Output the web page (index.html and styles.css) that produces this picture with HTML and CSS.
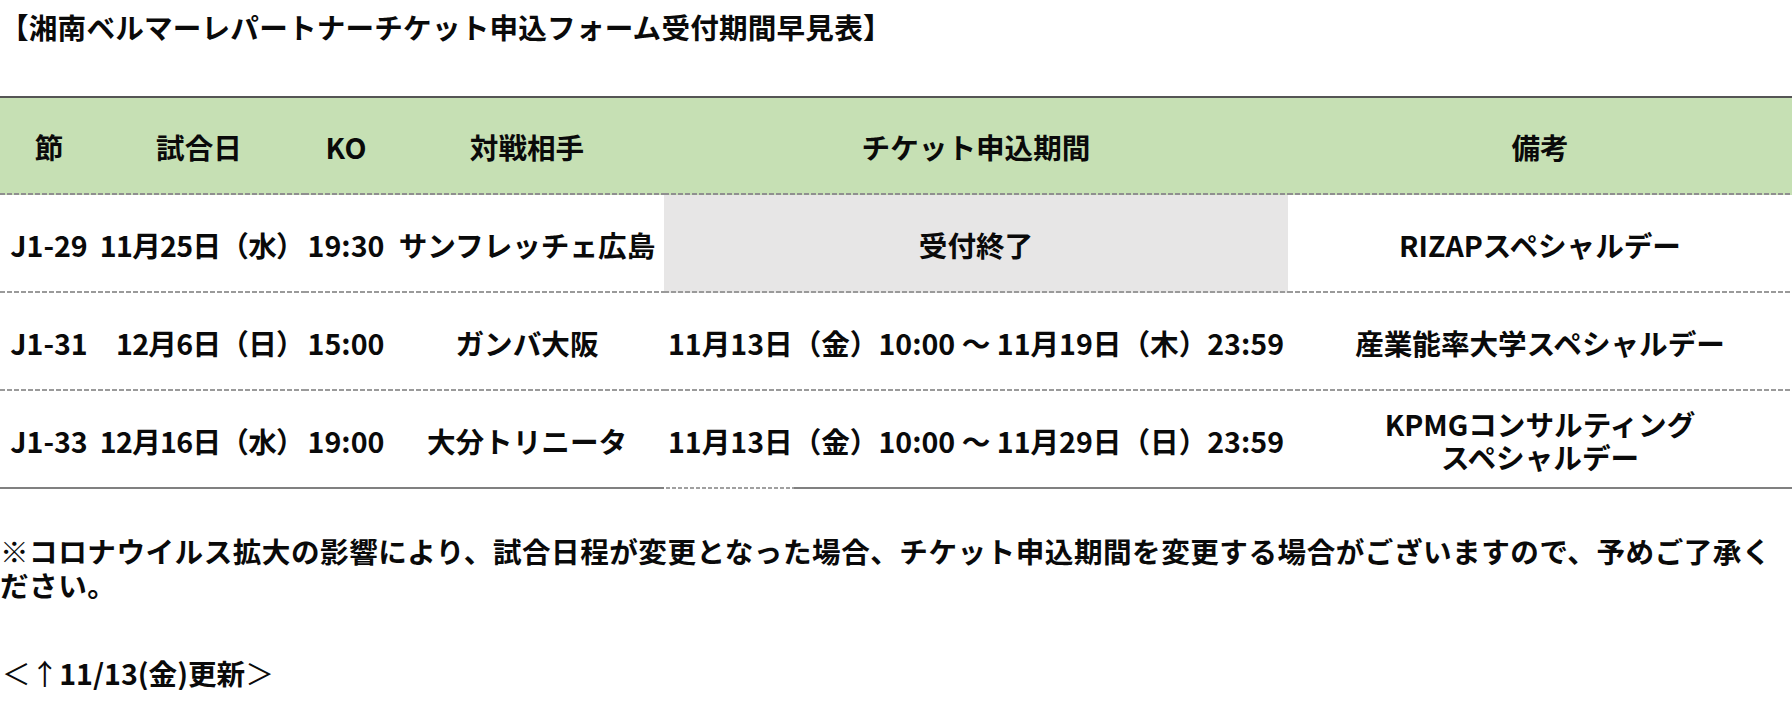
FILE: index.html
```html
<!DOCTYPE html>
<html lang="ja">
<head>
<meta charset="utf-8">
<title>湘南ベルマーレパートナーチケット申込フォーム受付期間早見表</title>
<link rel="stylesheet" href="styles.css">
</head>
<body>
<div class="page">
  <h1 class="title">【湘南ベルマーレパートナーチケット申込フォーム受付期間早見表】</h1>
  <table class="schedule">
    <colgroup>
      <col class="c-sec">
      <col class="c-date">
      <col class="c-ko">
      <col class="c-opp">
      <col class="c-period">
      <col class="c-note">
    </colgroup>
    <thead>
      <tr>
        <th>節</th>
        <th class="date-h">試合日</th>
        <th>KO</th>
        <th class="opp">対戦相手</th>
        <th>チケット申込期間</th>
        <th>備考</th>
      </tr>
    </thead>
    <tbody>
      <tr>
        <td>J1-29</td>
        <td class="date">11月25日（水）</td>
        <td>19:30</td>
        <td class="opp">サンフレッチェ広島</td>
        <td class="closed">受付終了</td>
        <td>RIZAPスペシャルデー</td>
      </tr>
      <tr>
        <td>J1-31</td>
        <td class="date">12月6日（日）</td>
        <td>15:00</td>
        <td class="opp">ガンバ大阪</td>
        <td class="period">11月13日（金）10:00 ～ 11月19日（木）23:59</td>
        <td>産業能率大学スペシャルデー</td>
      </tr>
      <tr class="last">
        <td>J1-33</td>
        <td class="date">12月16日（水）</td>
        <td>19:00</td>
        <td class="opp">大分トリニータ</td>
        <td class="period glitch">11月13日（金）10:00 ～ 11月29日（日）23:59</td>
        <td>KPMGコンサルティング<br>スペシャルデー</td>
      </tr>
    </tbody>
  </table>
  <p class="notice">※コロナウイルス拡大の影響により、試合日程が変更となった場合、チケット申込期間を変更する場合がございますので、予めご了承ください。</p>
  <p class="update"><span class="thin">＜↑</span>11/13(金)更新<span class="thin">＞</span></p>
</div>
</body>
</html>
```
FILE: styles.css
```css
html, body {
  margin: 0;
  padding: 0;
  background: #ffffff;
}

body {
  font-family: "Noto Sans CJK JP", "Noto Sans", sans-serif;
  font-weight: 700;
  color: #0a0a0a;
  width: 1792px;
  overflow: hidden;
}

.page {
  display: flex;
  flex-direction: column;
}

.title {
  margin: 0;
  padding: 6px 0 0 0;
  font-size: 28.6px;
  line-height: 42px;
  font-weight: 700;
  letter-spacing: 0.2px;
}

.schedule {
  margin-top: 48px;
  width: 100%;
  border-collapse: collapse;
  table-layout: fixed;
  font-size: 28.6px;
  line-height: 33px;
}

.c-sec { width: 98px; }
.c-date { width: 206px; }
.c-ko { width: 84px; }
.c-opp { width: 276px; }
.c-period { width: 624px; }
.c-note { width: 504px; }

.schedule th,
.schedule td {
  padding: 0;
  text-align: center;
  vertical-align: middle;
  white-space: nowrap;
  font-weight: 700;
}

.schedule .date {
  text-align: right;
  letter-spacing: -0.7px;
}

.schedule .date-h {
  padding-right: 4px;
}

.schedule .opp {
  padding-left: 2px;
}

.schedule thead th {
  height: 97px;
  background-color: #c6e0b4;
  border-top: 2px solid #555555;
  background-image: repeating-linear-gradient(to right, #8f8f8f 0 5px, transparent 5px 7px);
  background-size: 100% 2px;
  background-position: left bottom;
  background-repeat: no-repeat;
}

.schedule tbody td {
  height: 98px;
  background-image: repeating-linear-gradient(to right, #9a9a9a 0 5px, transparent 5px 7px);
  background-size: 100% 2px;
  background-position: left bottom;
  background-repeat: no-repeat;
}

.schedule tbody td.closed {
  background-color: #e7e6e6;
}

.schedule tbody tr.last td {
  background-image: linear-gradient(#808080, #808080);
}

.schedule tbody tr.last td.glitch {
  background-image:
    linear-gradient(#808080, #808080),
    repeating-linear-gradient(to right, #a0a0a0 0 4px, transparent 4px 6px);
  background-size: calc(100% - 130px) 2px, 128px 2px;
  background-position: right bottom, 2px bottom;
  background-repeat: no-repeat, no-repeat;
}

.notice {
  margin: 45px 0 0 0;
  font-size: 28.6px;
  line-height: 34px;
  letter-spacing: 0.5px;
}

.update {
  margin: 54px 0 0 0;
  padding-left: 2px;
  font-size: 28.6px;
  line-height: 34px;
}

.update .thin {
  font-weight: 400;
}
```
